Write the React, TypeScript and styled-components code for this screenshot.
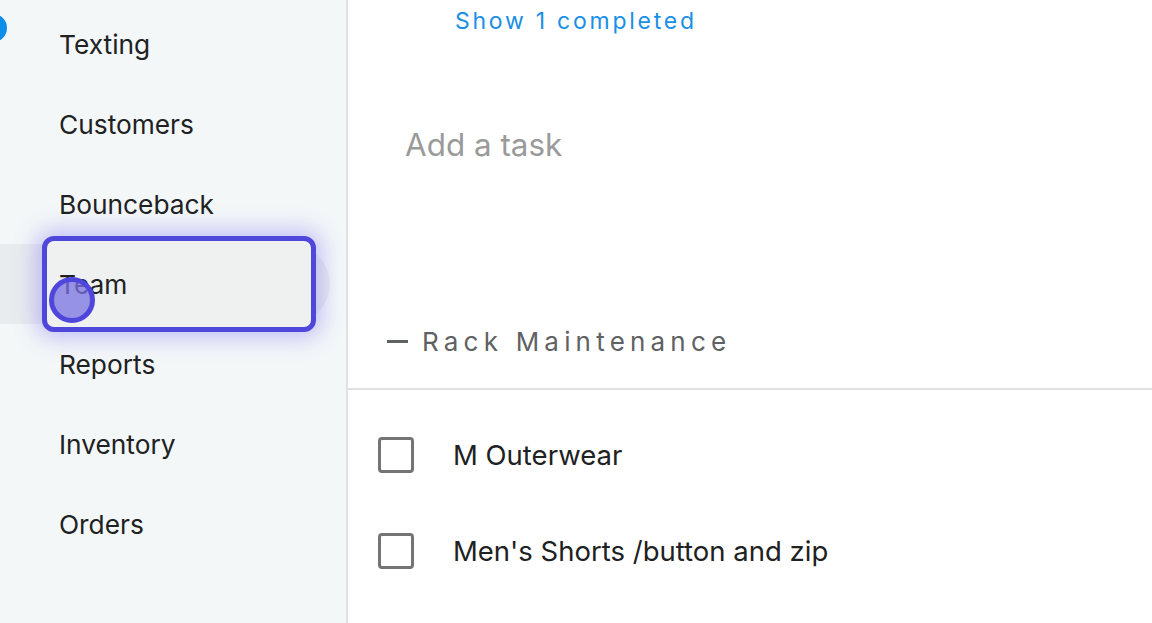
import styled, { createGlobalStyle } from "styled-components";

const GlobalStyle = createGlobalStyle`
  html, body {
    margin: 0;
    padding: 0;
    overflow: hidden;
    background: #ffffff;
  }
  body {
    font-family: Inter, "Noto Sans", sans-serif;
  }
`;

const Page = styled.div`
  display: flex;
  width: 1152px;
  height: 623px;
  overflow: hidden;
`;

const Sidebar = styled.aside`
  position: relative;
  width: 346px;
  flex-shrink: 0;
  background: #f4f7f8;
  border-right: 2px solid #dfe3e5;
  padding-top: 4px;
  box-sizing: content-box;
`;

const Badge = styled.span`
  position: absolute;
  left: -21px;
  top: 14px;
  width: 28px;
  height: 28px;
  border-radius: 50%;
  background: #0b8ee9;
`;

const NavList = styled.ul`
  list-style: none;
  margin: 0;
  padding: 0;
`;

const NavItem = styled.li<{ $active?: boolean }>`
  position: relative;
  display: flex;
  align-items: center;
  height: 80px;
  width: 330px;
  padding-left: 59px;
  box-sizing: border-box;
  font-size: 26.3px;
  color: #202122;
  border-radius: 0 40px 40px 0;
  background: ${(p) => (p.$active ? "#e9ecee" : "transparent")};
`;

const Label = styled.span`
  position: relative;
  z-index: 1;
`;

const FocusRing = styled.span`
  position: absolute;
  left: 42px;
  top: -8px;
  width: 274px;
  height: 96px;
  box-sizing: border-box;
  border: 5px solid #4f46dc;
  border-radius: 12px;
  background: #eff1f1;
  box-shadow: 0 0 22px 6px rgba(99, 90, 240, 0.35);
`;

const Touch = styled.span`
  position: absolute;
  left: 49px;
  top: 33px;
  width: 46px;
  height: 46px;
  box-sizing: border-box;
  border-radius: 50%;
  border: 5px solid #4f46dc;
  background: rgba(120, 114, 225, 0.75);
  z-index: 2;
`;

const Main = styled.main`
  flex: 1;
  display: flex;
  flex-direction: column;
`;

const ShowCompleted = styled.button`
  align-self: flex-start;
  margin: 7px 0 0 107px;
  padding: 0;
  border: none;
  background: none;
  font-family: Inter, "Noto Sans", sans-serif;
  font-size: 23px;
  letter-spacing: 2.75px;
  color: #1a8fe6;
  line-height: 28px;
`;

const AddTask = styled.div`
  margin: 92px 0 0 57px;
  font-size: 31.4px;
  color: #9a9a9a;
  line-height: 36px;
`;

const GroupHeader = styled.div`
  display: flex;
  align-items: center;
  gap: 14px;
  margin: 160px 0 0 39px;
  height: 36px;
  font-size: 26px;
  letter-spacing: 5.2px;
  color: #606163;
`;

const Dash = styled.span`
  display: block;
  width: 21px;
  height: 3px;
  background: #606163;
`;

const Divider = styled.hr`
  margin: 29px 0 0;
  border: none;
  border-top: 2px solid #e1e1e1;
`;

const TaskList = styled.ul`
  list-style: none;
  margin: 17px 0 0;
  padding: 0;
`;

const TaskRow = styled.li`
  display: flex;
  align-items: center;
  height: 96px;
  padding-left: 30px;
  gap: 39px;
  font-size: 27.5px;
  color: #202122;
`;

const Checkbox = styled.span`
  width: 36px;
  height: 36px;
  box-sizing: border-box;
  border: 3px solid #747474;
  border-radius: 4px;
`;

const navItems = ["Texting", "Customers", "Bounceback", "Team", "Reports", "Inventory", "Orders"];
const tasks = ["M Outerwear", "Men's Shorts /button and zip"];

export default function App() {
  return (
    <>
      <GlobalStyle />
      <Page>
        <Sidebar>
          <Badge />
          <NavList>
            {navItems.map((item) => (
              <NavItem key={item} $active={item === "Team"}>
                {item === "Team" && <FocusRing />}
                <Label>{item}</Label>
                {item === "Team" && <Touch />}
              </NavItem>
            ))}
          </NavList>
        </Sidebar>
        <Main>
          <ShowCompleted>Show 1 completed</ShowCompleted>
          <AddTask>Add a task</AddTask>
          <GroupHeader>
            <Dash />
            Rack Maintenance
          </GroupHeader>
          <Divider />
          <TaskList>
            {tasks.map((t) => (
              <TaskRow key={t}>
                <Checkbox />
                {t}
              </TaskRow>
            ))}
          </TaskList>
        </Main>
      </Page>
    </>
  );
}
